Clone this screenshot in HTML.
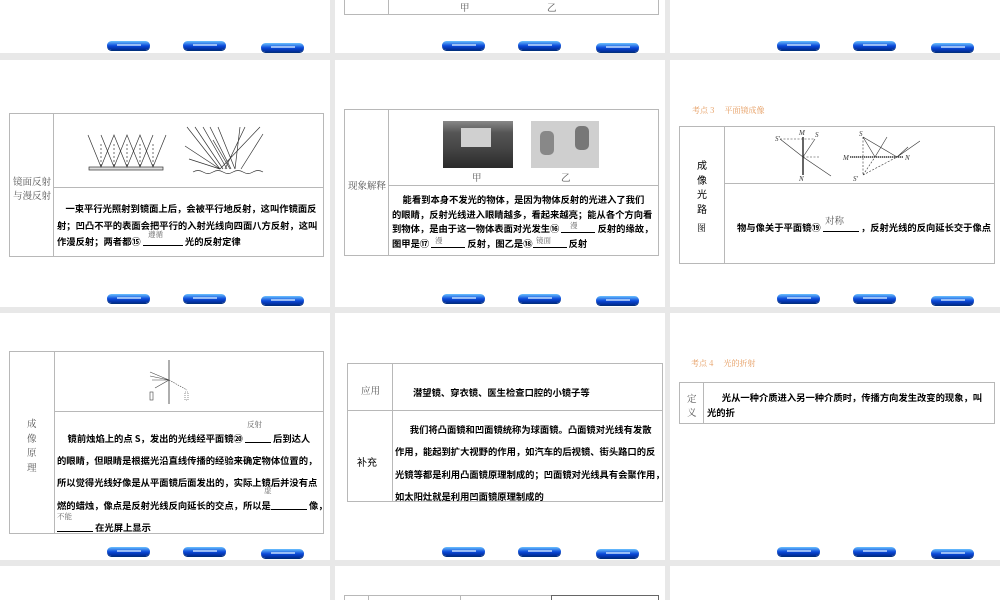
<!DOCTYPE html>
<html style="width:1000px;height:600px;overflow:hidden;background:#e8e8e8"><head><meta charset="utf-8"><style>
*{margin:0;padding:0;box-sizing:border-box}
body{width:1000px;height:600px;background:#e8e8e8;position:relative;overflow:hidden;font-family:"Liberation Serif","Noto Serif CJK SC","Noto Sans CJK SC",serif;color:#000}
.p{position:absolute;background:#fff;width:330px;height:247px;overflow:hidden}
.a{position:absolute;white-space:nowrap}
.ln{position:absolute;background:#b8b8b8}
.t{font-size:9.3px;font-weight:bold;font-family:"Noto Sans CJK SC",sans-serif;line-height:1}
.g{color:#555;font-size:9.5px;font-family:"Noto Serif CJK SC",serif}
.s{color:#666;font-size:7.5px;font-family:"Noto Serif CJK SC",serif}
.b{position:absolute;width:43px;height:9px;border-radius:5px;background:linear-gradient(#6ac0ff,#0a48d8 55%,#002a90);box-shadow:0 1px 0 #003080}
.b::after{content:"";position:absolute;left:10px;right:9px;top:3px;height:2px;background:#cfe4ff;opacity:.7}
.o{color:#e59a5c;font-size:8px;font-family:"Noto Serif CJK SC",serif}
.u{display:inline-block;border-bottom:1px solid #000;height:9px;vertical-align:-1px}
</style></head><body>

<!-- ROW 0 -->
<div class="p" style="left:0;top:-194px"></div>
<div class="p" style="left:335px;top:-194px"></div>
<div class="p" style="left:670px;top:-194px"></div>
<div class="ln" style="left:344px;top:0;width:1px;height:14px"></div>
<div class="ln" style="left:388px;top:0;width:1px;height:14px"></div>
<div class="ln" style="left:658px;top:0;width:1px;height:14px"></div>
<div class="ln" style="left:344px;top:14px;width:315px;height:1px"></div>
<div class="a g" style="left:460px;top:0">甲</div>
<div class="a g" style="left:547px;top:0">乙</div>

<!-- ROW 1 panel 1 -->
<div class="p" style="left:0;top:60px"></div>
<div class="ln" style="left:9px;top:113px;width:314px;height:1px"></div>
<div class="ln" style="left:9px;top:256px;width:314px;height:1px"></div>
<div class="ln" style="left:9px;top:113px;width:1px;height:144px"></div>
<div class="ln" style="left:323px;top:113px;width:1px;height:144px"></div>
<div class="ln" style="left:53px;top:113px;width:1px;height:144px"></div>
<div class="ln" style="left:53px;top:187px;width:270px;height:1px"></div>
<svg class="a" style="left:85px;top:124px" width="185" height="52" viewBox="0 0 185 52" fill="none" stroke="#333" stroke-width=".7">
<rect x="4" y="43" width="74" height="3" fill="#ddd"/>
<path d="M3 11L16 43L29 11L42 43L55 11L68 43L81 11M16 11L29 43L42 11L55 43L68 11"/>
<path d="M16 20V43M29 20V43M42 20V43M55 20V43M68 20V43" stroke-dasharray="2 2"/>
<path d="M108 48q5-3 10 0t10 0t10 0t10 0t10 0t10 0t10 0" />
<path d="M102 3L135 45M110 3L138 45M118 3L142 45M125 3L146 45M133 3L150 45M100 22L135 45M104 35L135 45M135 45L175 3M140 45L160 3M145 45L128 16M150 45L155 3M156 45L178 10"/>
</svg>
<div class="a g" style="left:13px;top:174px;line-height:14px">镜面反射<br>与漫反射</div>
<div class="a t" style="left:57px;top:200px;line-height:16.5px">&nbsp;&nbsp;&nbsp;&nbsp;一束平行光照射到镜面上后，会被平行地反射，这叫作镜面反<br>射；凹凸不平的表面会把平行的入射光线向四面八方反射，这叫<br>作漫反射；两者都⑮ <span class="u" style="width:40px"></span> 光的反射定律</div>
<div class="a s" style="left:148px;top:229px">遵循</div>

<!-- ROW 1 panel 2 -->
<div class="p" style="left:335px;top:60px"></div>
<div class="ln" style="left:344px;top:109px;width:314px;height:1px"></div>
<div class="ln" style="left:344px;top:255px;width:314px;height:1px"></div>
<div class="ln" style="left:344px;top:109px;width:1px;height:147px"></div>
<div class="ln" style="left:658px;top:109px;width:1px;height:147px"></div>
<div class="ln" style="left:388px;top:109px;width:1px;height:147px"></div>
<div class="ln" style="left:388px;top:185px;width:270px;height:1px"></div>
<div class="a" style="left:443px;top:121px;width:70px;height:47px;background:linear-gradient(#888,#555 25%,#444 60%,#2a2a2a)"></div>
<div class="a" style="left:461px;top:128px;width:30px;height:19px;background:#d0d0d0"></div>
<div class="a" style="left:531px;top:121px;width:68px;height:47px;background:#cfcfcf"></div>
<div class="a" style="left:540px;top:131px;width:14px;height:24px;background:#888;border-radius:5px"></div>
<div class="a" style="left:575px;top:126px;width:14px;height:24px;background:#777;border-radius:5px"></div>
<div class="a g" style="left:472px;top:170px">甲</div>
<div class="a g" style="left:561px;top:170px">乙</div>
<div class="a g" style="left:348px;top:178px">现象解释</div>
<div class="a t" style="left:392px;top:192px;line-height:14.7px">&nbsp;&nbsp;&nbsp;&nbsp;&nbsp;能看到本身不发光的物体，是因为物体反射的光进入了我们<br>的眼睛，反射光线进入眼睛越多，看起来越亮；能从各个方向看<br>到物体，是由于这一物体表面对光发生⑯ <span class="u" style="width:34px"></span> 反射的缘故，<br>图甲是⑰ <span class="u" style="width:34px"></span> 反射，图乙是⑱<span class="u" style="width:34px"></span> 反射</div>
<div class="a s" style="left:570px;top:220px">漫</div>
<div class="a s" style="left:435px;top:235px">漫</div>
<div class="a s" style="left:536px;top:235px">镜面</div>

<!-- ROW 1 panel 3 -->
<div class="p" style="left:670px;top:60px"></div>
<div class="a o" style="left:692px;top:105px">考点 3　 平面镜成像</div>
<div class="ln" style="left:679px;top:126px;width:315px;height:1px"></div>
<div class="ln" style="left:679px;top:263px;width:315px;height:1px"></div>
<div class="ln" style="left:679px;top:126px;width:1px;height:138px"></div>
<div class="ln" style="left:994px;top:126px;width:1px;height:138px"></div>
<div class="ln" style="left:724px;top:126px;width:1px;height:138px"></div>
<div class="ln" style="left:724px;top:183px;width:270px;height:1px"></div>
<svg class="a" style="left:775px;top:129px" width="145" height="54" viewBox="0 0 145 54" fill="none" stroke="#333" stroke-width=".6" font-size="7" font-style="italic" font-family="Liberation Serif">
<path d="M28 8V46" stroke-width="1.5"/><path d="M5 10H40" stroke-dasharray="2 1.5"/>
<path d="M40 10L28 28L56 47M5 10L28 28"/><path d="M28 28H45" stroke-dasharray="2 1.5"/>
<path d="M75 28H128" stroke-dasharray="1 1" stroke-width="1.5"/><path d="M75 28H128"/>
<path d="M88 8V46" stroke-dasharray="2 1.5"/><path d="M88 8L122 28L145 12M88 8L100 28M100 28L112 8M122 28L133 18"/>
<path d="M88 46L100 28M88 46L122 28" stroke-dasharray="2 1.5"/>
<g stroke="none" fill="#333"><text x="24" y="6">M</text><text x="0" y="12">S'</text><text x="40" y="8">S</text><text x="24" y="52">N</text><text x="68" y="31">M</text><text x="130" y="31">N</text><text x="84" y="7">S</text><text x="78" y="52">S'</text></g>
</svg>
<div class="a" style="left:697px;top:158px;font-size:10px;font-family:'Noto Sans CJK SC',sans-serif;line-height:14.5px;width:12px">成<br>像<br>光<br>路</div>
<div class="a" style="left:697px;top:221px;font-size:9px;font-family:'Noto Serif CJK SC',serif">图</div>
<div class="a g" style="left:825px;top:213px">对称</div>
<div class="a t" style="left:737px;top:223px">物与像关于平面镜⑲ <span class="u" style="width:36px"></span> ，反射光线的反向延长交于像点</div>

<!-- ROW 2 panel 1 -->
<div class="p" style="left:0;top:313px"></div>
<div class="ln" style="left:9px;top:351px;width:314px;height:1px"></div>
<div class="ln" style="left:9px;top:533px;width:314px;height:1px"></div>
<div class="ln" style="left:9px;top:351px;width:1px;height:183px"></div>
<div class="ln" style="left:323px;top:351px;width:1px;height:183px"></div>
<div class="ln" style="left:54px;top:351px;width:1px;height:183px"></div>
<div class="ln" style="left:54px;top:411px;width:269px;height:1px"></div>
<svg class="a" style="left:145px;top:358px" width="50" height="48" viewBox="0 0 50 48" fill="none" stroke="#444" stroke-width=".6">
<path d="M24 2V46" stroke-width="1.2" stroke="#777"/>
<path d="M5 14L24 22L10 30M5 18L24 22M7 22L24 22"/><path d="M24 22L42 32" stroke-dasharray="1.5 1"/>
<rect x="5" y="34" width="3" height="8"/><rect x="40" y="34" width="3" height="8" stroke-dasharray="1 1"/>
</svg>
<div class="a g" style="left:27px;top:416px;line-height:14.5px;width:12px">成<br>像<br>原<br>理</div>
<div class="a t" style="left:57px;top:427px;line-height:22.2px">&nbsp;&nbsp;&nbsp;&nbsp;&nbsp;镜前烛焰上的点 S，发出的光线经平面镜⑳ <span class="u" style="width:26px"></span> 后到达人<br>的眼睛，但眼睛是根据光沿直线传播的经验来确定物体位置的，<br>所以觉得光线好像是从平面镜后面发出的，实际上镜后并没有点<br>燃的蜡烛，像点是反射光线反向延长的交点，所以是<span class="u" style="width:36px"></span> 像，<br><span class="u" style="width:36px"></span> 在光屏上显示</div>
<div class="a s" style="left:247px;top:419px">反射</div>
<div class="a s" style="left:264px;top:485px">虚</div>
<div class="a s" style="left:57px;top:511px">不能</div>

<!-- ROW 2 panel 2 -->
<div class="p" style="left:335px;top:313px"></div>
<div class="ln" style="left:347px;top:363px;width:315px;height:1px"></div>
<div class="ln" style="left:347px;top:410px;width:315px;height:1px"></div>
<div class="ln" style="left:347px;top:501px;width:315px;height:1px"></div>
<div class="ln" style="left:347px;top:363px;width:1px;height:139px"></div>
<div class="ln" style="left:662px;top:363px;width:1px;height:139px"></div>
<div class="ln" style="left:392px;top:363px;width:1px;height:139px"></div>
<div class="a g" style="left:361px;top:383px">应用</div>
<div class="a t" style="left:413px;top:388px">潜望镜、穿衣镜、医生检查口腔的小镜子等</div>
<div class="a" style="left:357px;top:454px;font-size:10px;font-family:'Noto Sans CJK SC',sans-serif">补充</div>
<div class="a t" style="left:395px;top:418px;line-height:22.3px">&nbsp;&nbsp;&nbsp;&nbsp;&nbsp;&nbsp;&nbsp;我们将凸面镜和凹面镜统称为球面镜。凸面镜对光线有发散<br>作用，能起到扩大视野的作用，如汽车的后视镜、街头路口的反<br>光镜等都是利用凸面镜原理制成的；凹面镜对光线具有会聚作用，<br>如太阳灶就是利用凹面镜原理制成的</div>

<!-- ROW 2 panel 3 -->
<div class="p" style="left:670px;top:313px"></div>
<div class="a o" style="left:691px;top:358px">考点 4　 光的折射</div>
<div class="ln" style="left:679px;top:382px;width:315px;height:1px"></div>
<div class="ln" style="left:679px;top:423px;width:315px;height:1px"></div>
<div class="ln" style="left:679px;top:382px;width:1px;height:42px"></div>
<div class="ln" style="left:994px;top:382px;width:1px;height:42px"></div>
<div class="ln" style="left:703px;top:382px;width:1px;height:42px"></div>
<div class="a g" style="left:687px;top:391px;line-height:14px;width:12px">定<br>义</div>
<div class="a t" style="left:707px;top:390px;line-height:15px">&nbsp;&nbsp;&nbsp;&nbsp;&nbsp;&nbsp;&nbsp;光从一种介质进入另一种介质时，传播方向发生改变的现象，叫<br>光的折</div>

<!-- ROW 3 -->
<div class="p" style="left:0;top:566px;height:34px"></div>
<div class="p" style="left:335px;top:566px;height:34px"></div>
<div class="p" style="left:670px;top:566px;height:34px"></div>
<div class="ln" style="left:344px;top:595px;width:315px;height:1px"></div>
<div class="ln" style="left:344px;top:595px;width:1px;height:6px"></div>
<div class="ln" style="left:368px;top:595px;width:1px;height:6px"></div>
<div class="ln" style="left:460px;top:595px;width:1px;height:6px"></div>
<div class="ln" style="left:551px;top:595px;width:1px;height:6px;background:#666"></div>
<div class="ln" style="left:551px;top:595px;width:107px;height:1px;background:#666"></div>
<div class="ln" style="left:658px;top:595px;width:1px;height:6px;background:#666"></div>

<!-- buttons -->
<div class="b" style="left:107px;top:41px"></div><div class="b" style="left:183px;top:41px"></div><div class="b" style="left:261px;top:43px"></div>
<div class="b" style="left:442px;top:41px"></div><div class="b" style="left:518px;top:41px"></div><div class="b" style="left:596px;top:43px"></div>
<div class="b" style="left:777px;top:41px"></div><div class="b" style="left:853px;top:41px"></div><div class="b" style="left:931px;top:43px"></div>

<div class="b" style="left:107px;top:294px"></div><div class="b" style="left:183px;top:294px"></div><div class="b" style="left:261px;top:296px"></div>
<div class="b" style="left:442px;top:294px"></div><div class="b" style="left:518px;top:294px"></div><div class="b" style="left:596px;top:296px"></div>
<div class="b" style="left:777px;top:294px"></div><div class="b" style="left:853px;top:294px"></div><div class="b" style="left:931px;top:296px"></div>

<div class="b" style="left:107px;top:547px"></div><div class="b" style="left:183px;top:547px"></div><div class="b" style="left:261px;top:549px"></div>
<div class="b" style="left:442px;top:547px"></div><div class="b" style="left:518px;top:547px"></div><div class="b" style="left:596px;top:549px"></div>
<div class="b" style="left:777px;top:547px"></div><div class="b" style="left:853px;top:547px"></div><div class="b" style="left:931px;top:549px"></div>
</body></html>
